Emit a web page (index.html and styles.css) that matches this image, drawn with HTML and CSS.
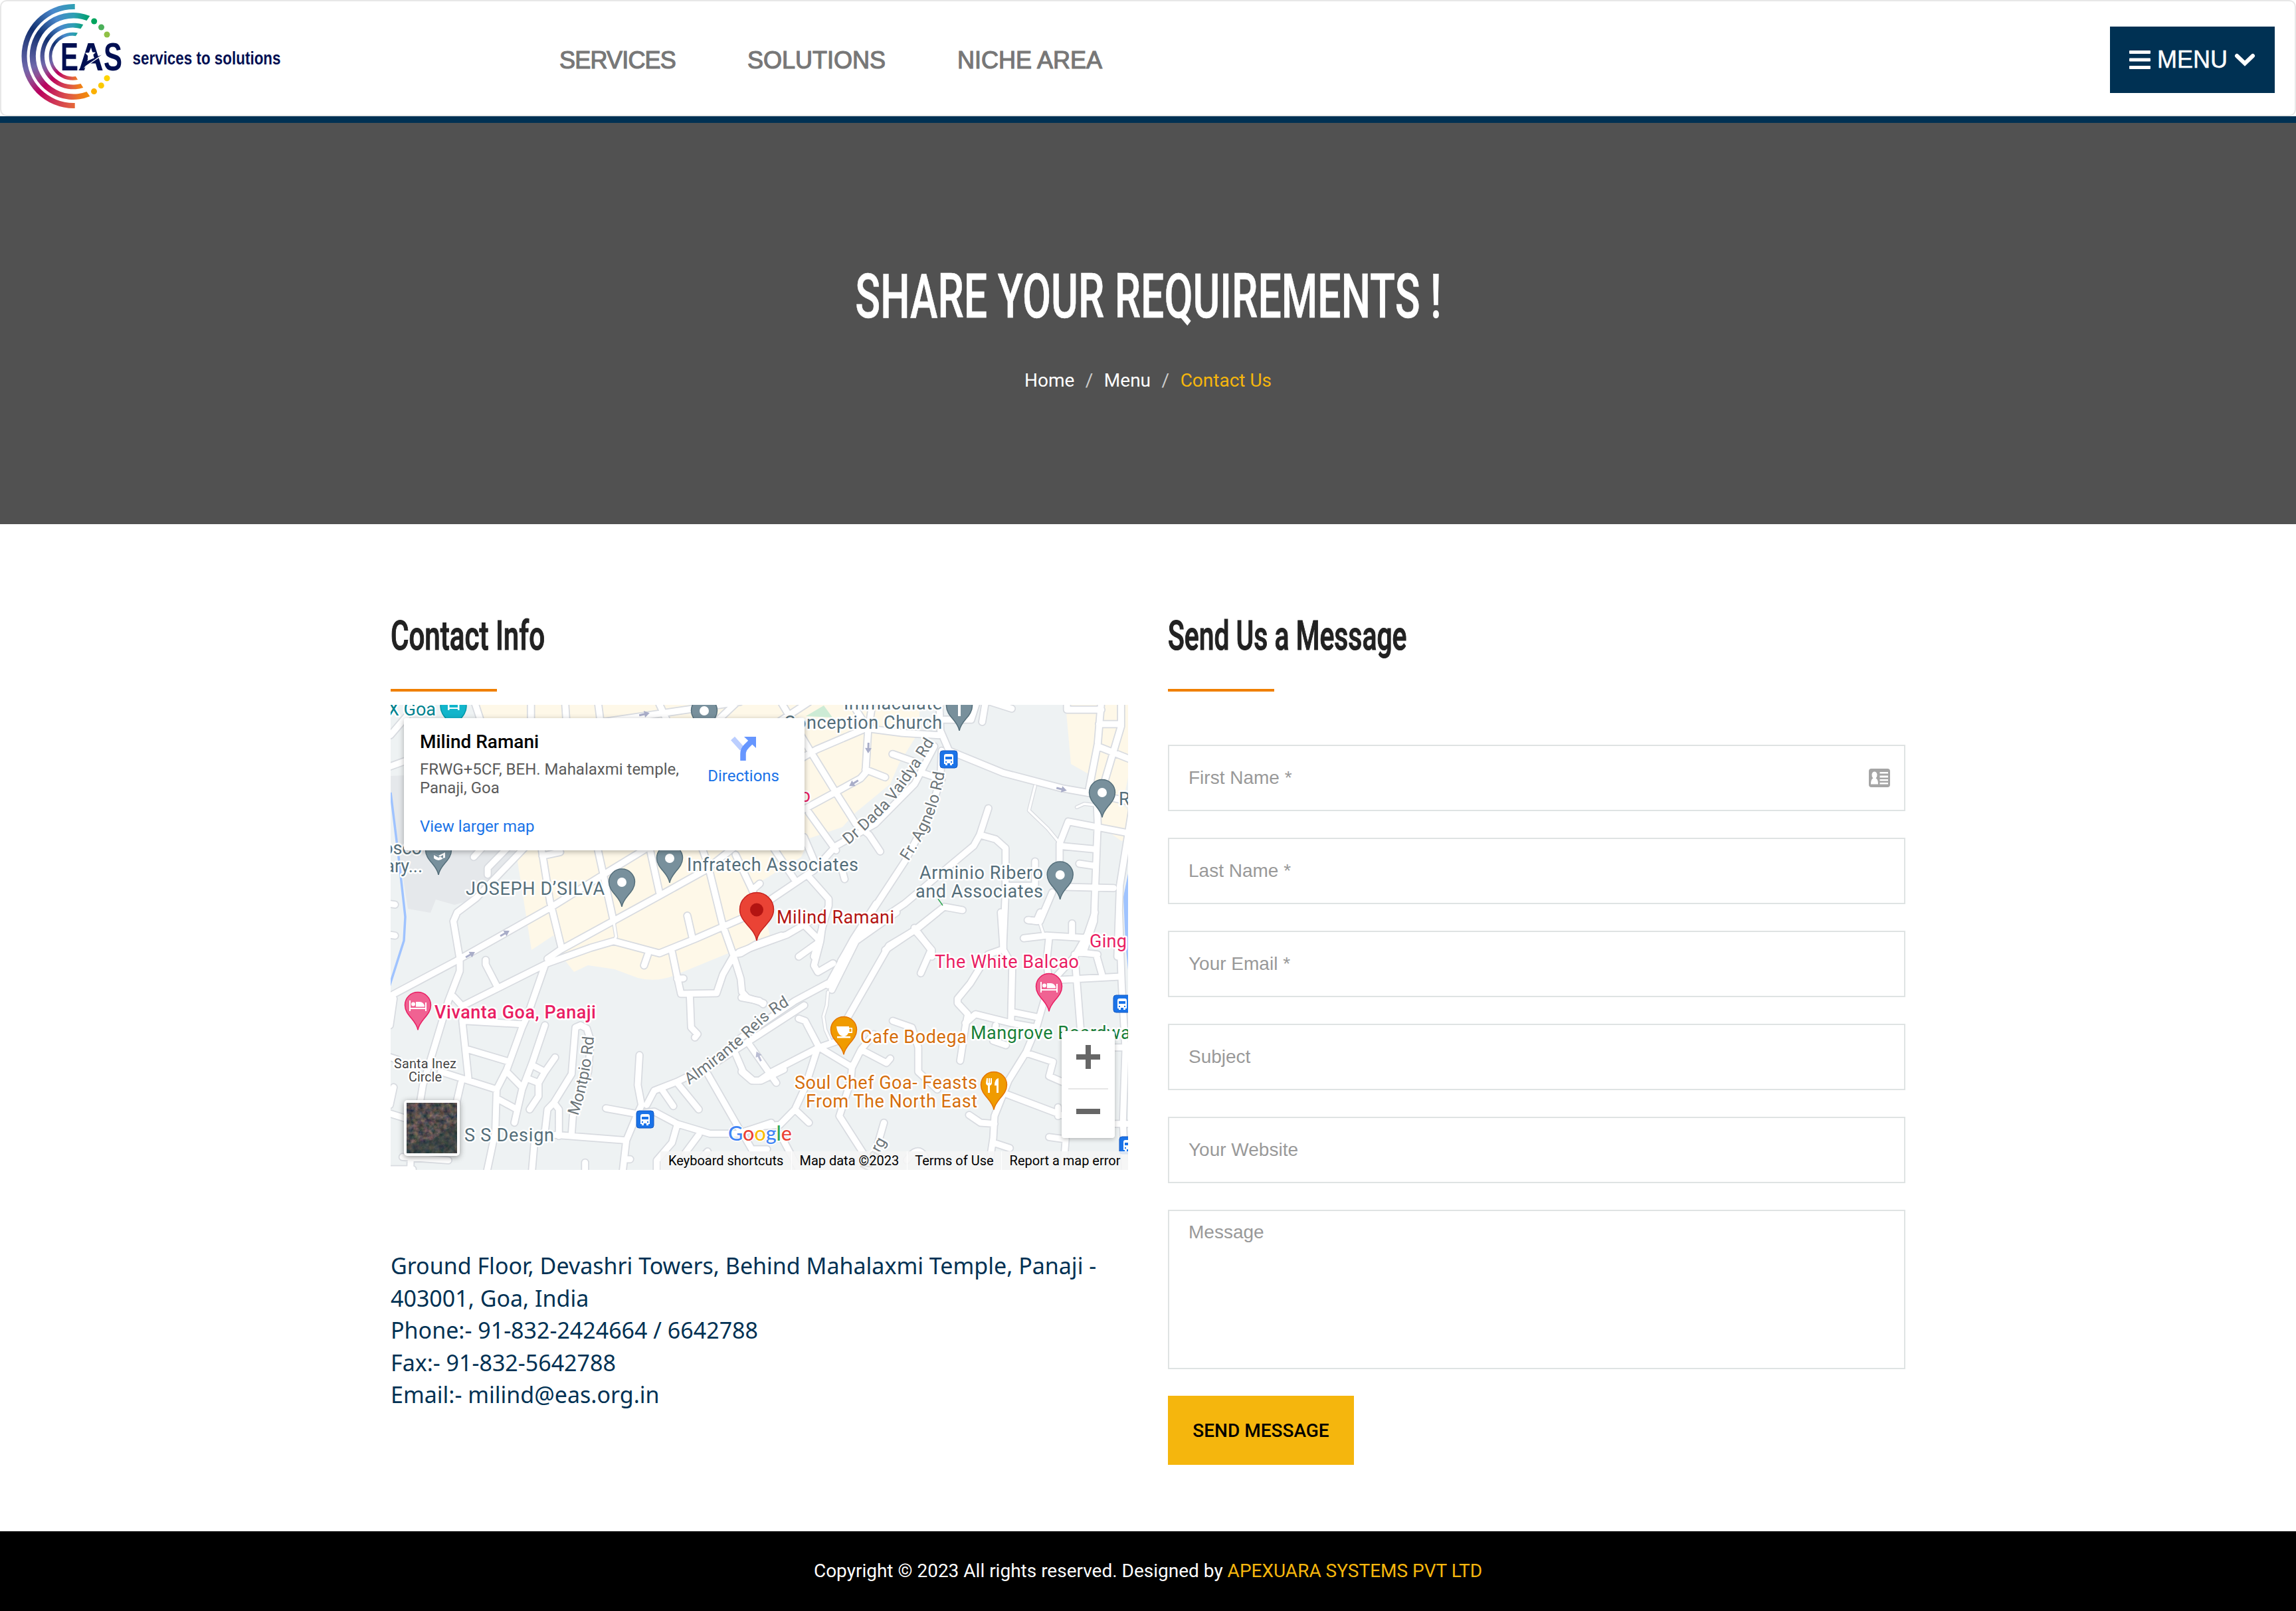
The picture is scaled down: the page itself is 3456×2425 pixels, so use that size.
FILE: index.html
```html
<!DOCTYPE html>
<html lang="en">
<head>
<meta charset="utf-8">
<title>Contact Us - EAS</title>
<link rel="stylesheet" href="styles.css">
</head>
<body>
<header class="header">
  <div class="navbar">
    <a class="logo">
      <span class="logo-rings"></span>
      <svg class="logo-mark" viewBox="0 0 440 171">
        <circle cx="141.7" cy="32" r="4.5" fill="#00a45d"/><circle cx="152.5" cy="41" r="4.5" fill="#4bb05a"/><circle cx="161" cy="52" r="4.5" fill="#8fc045"/>
        <circle cx="161" cy="117.7" r="4.5" fill="#ffd400"/><circle cx="152.3" cy="128.7" r="4.5" fill="#fbc900"/><circle cx="141.5" cy="137.6" r="4.5" fill="#fbb000"/>
        <g class="logo-letters">
          <text x="91" y="105.5" textLength="27" lengthAdjust="spacingAndGlyphs">E</text>
          <text x="118" y="105.5" textLength="38" lengthAdjust="spacingAndGlyphs">A</text>
          <text x="156" y="105.5" textLength="28" lengthAdjust="spacingAndGlyphs">S</text>
        </g>
        <path d="M136.500 73l2 5.500 5.500.3-4 4 2.200 5.400 12.500-5.200-29 20 6.500-13.500 0-5.500-4.200-4.500 6-.3z" fill="#fff"/>
        <path d="M118 105.500L131 92l22-9.500L129 99l-6 6.500z" fill="#000f52"/>
        <text class="logo-tag" x="199.500" y="96.500" textLength="223" lengthAdjust="spacingAndGlyphs">services to solutions</text>
      </svg>
    </a>
    <nav class="nav">
      <a class="nav-link nav-link-tight">SERVICES</a>
      <a class="nav-link">SOLUTIONS</a>
      <a class="nav-link">NICHE AREA</a>
    </nav>
    <button class="menu-button">
      <svg width="32" height="30" viewBox="0 0 32 30" fill="#fff"><rect y="1" width="32" height="5" rx="1"/><rect y="12.500" width="32" height="5" rx="1"/><rect y="24" width="32" height="5" rx="1"/></svg>
      <span>MENU</span>
      <svg width="32" height="20" viewBox="0 0 32 20"><path d="M4 4l12 11.500L28 4" fill="none" stroke="#fff" stroke-width="6" stroke-linecap="round"/></svg>
    </button>
  </div>
</header>

<section class="hero">
  <h1 class="hero-title"><span>SHARE YOUR REQUIREMENTS !</span></h1>
  <div class="crumbs"><a>Home</a><i>/</i><a>Menu</a><i>/</i><b>Contact Us</b></div>
</section>

<main class="content">
  <section class="column">
    <h2 class="title"><span class="title-info">Contact Info</span></h2>
    <div class="rule"></div>
    <div class="map">
      <svg class="map-canvas" viewBox="588 1061 1110 700">
        <defs>
          <g id="roads">
            <g transform="translate(560 900) scale(.3954 .3333)">
              <path d="M390 470L415 560M605 470V560M735 470L740 560M860 470L870 560M880 560L1400 470M1310 560L1390 470M1090 470L1125 560M70 620L135 530M60 765L130 735"/>
            </g>
            <g transform="translate(560 1280) scale(.3827 .3333)">
              <path d="M60 665L330 500L700 260L910 110L1110 -30M640 -60L410 215L335 280L320 320L345 490V545L300 680L200 1060L190 1130L155 1300L150 1460M360 700L690 510L860 440L950 410L1130 465L1270 400L1470 300M690 490L740 450L1130 205L1310 90L1420 -10M665 -20L700 230L745 440M885 -20L950 320M1090 -20L1130 190M1295 -20L1320 60L1380 340L1420 470L1450 580L1455 640L1475 665L1540 690M1430 20L1500 190M1495 180L1525 150M1420 470L1450 465L1510 425L1610 385M1420 480L1380 560L1355 645L1215 648L1200 570L1180 460M1200 580L1225 578M1250 655L1255 800L1280 830L1270 845M1085 470L1070 520M1240 295L1260 395M447 495V515L490 610M680 520L610 750L590 800L530 990L490 1080L485 1270L465 1380L450 1460M320 660L360 710L355 770L380 1040M365 770L590 785M380 900L540 955M270 1000L490 1080M350 1050L330 1150M530 1000L590 1070M490 1120L570 1170M680 790L630 960L590 1080L560 1230M720 935L680 1000L655 1050V1110L620 1170M630 970L680 1000M610 1030L655 1050M820 790L800 800L785 1010L715 1140L690 1170L680 1270L640 1300L628 1460M820 790L845 805L860 860L850 1000L790 1200L785 1280M715 1140L735 1170V1290M720 1285L1000 1310M1052 925L1045 1060L1060 1150L1040 1200L1000 1310L985 1460M1080 1150L1110 1085L1200 1045L1350 960L1700 700M920 1165L1040 1190L1110 1180L1200 1235L1330 1280L1440 1280L1570 1230M1140 1080L1185 1155M1200 1050L1285 1170M1320 1010L1450 1270M1200 1240L1180 1320L1120 1400V1460M1285 1285L1230 1370M1430 920L1460 1000L1500 1040H1530L1620 990M1480 870L1590 1050M85 670L70 790M60 930L100 945M60 1185L130 1210M85 1070L70 1150M120 1385L300 1400M60 1440H160M60 240L90 245M60 380L90 385M838 1410V1460M1320 1360L1280 1410M400 30L440 -20M455 110V80L540 -20M670 25L740 8M1000 1395H1015"/>
            </g>
            <g transform="translate(1120 1380) scale(.3827 .3333)">
              <path d="M-20 160L50 130L170 80L260 20M520 -60L430 100L330 310M600 -20L440 110L345 330M330 300L200 380L-30 560M760 -20L680 55L570 130L410 450L370 560L295 590L110 700L60 740H30L-10 700M670 50L735 150L695 255M295 590L425 680L460 600L510 530M425 670L420 740L375 900L470 1070L500 1150M460 600L560 660L575 640M290 590L240 770L200 870L140 940L80 945L0 970M200 870L255 930M215 460L240 470L295 590M585 470L660 500L685 590V700L760 780M1010 -20L1020 150L1055 220L1050 470M1010 150L960 170L890 300L840 370V390L880 440L870 500L850 650M870 480L910 440L1050 480L1150 500M1055 430L1160 455M990 490L980 560L1030 580M1200 90L1190 200L1200 300L1150 500L1110 610L1040 740L985 900L980 1000L960 1150M1100 97L1190 85L1340 95M1380 -20L1350 80L1300 180L1220 280M1240 285L1480 270M1300 170L1325 530M1385 170L1410 270M1310 160L1390 170M1290 30V90M1120 15L1150 20L1165 -20M1110 615L1215 655L1200 720L1260 750M1030 800L1260 900M1235 860V900M885 895L930 930L985 935M980 1020L1045 1045M1200 995L1265 1005L1255 1150M550 930L520 1050L480 1160M640 1100Q680 1030 710 1080L730 1160M215 180L300 110L230 30M315 -20L300 110L275 220L290 250L350 210M-10 365L60 380L75 395M0 990L30 1050L90 1050M150 1000L220 1150M1460 590H1520M1460 935H1520"/>
              <path class="road-wide" d="M1475 -20L1485 300L1500 600L1490 930L1500 1160"/>
            </g>
            <g transform="translate(1140 1040) scale(.3699 .3333)">
              <path d="M80 20L220 280L320 460L400 600L455 650L500 725M210 50L60 160M140 330L240 265L440 170M470 40L450 190L440 370L420 395L330 450L180 540M440 355L520 390M370 30L450 170L590 190L740 200M740 40L745 180L780 270L1000 370L1240 440L1370 465L1600 520M550 285L640 320M670 370L750 400M750 270L745 400L700 560L600 770L470 990L340 1220M720 250L640 420L480 600L320 700L230 810L30 960M210 550L320 720M60 700L150 850M190 660L240 790M210 840L290 940V970L230 1200M340 790L355 850M940 530L905 650L880 700L600 960L400 1110L340 1220M905 650L970 670L1010 710V900L1000 1160M1400 40L1385 240L1350 440M1480 40V160L1410 420M1390 150H1480M1260 60V85L1400 85M1385 250L1520 310M1380 460L1385 600L1375 880L1370 1040L1330 1170M1230 860V690L1265 590L1500 640M1230 700L1370 715M1310 780L1370 790M1250 885L1450 890M1200 910L1150 1040L1100 1035M1010 880H1130V770M835 990L760 975L640 1080L520 1170M640 1080L710 1170V1200M915 140L930 40M950 50L1035 80M760 130H870L890 60"/>
              <path class="road-wide" d="M1530 500L1475 880L1465 1200"/>
            </g>
          </g>
          <g id="lanes">
            <path transform="translate(560 1280) scale(.3827 .3333)" d="M950 320L960 390L950 410"/>
            <path transform="translate(1120 1380) scale(.3827 .3333)" d="M330 340L325 400L312 450L320 510L340 560"/>
            <path transform="translate(1140 1040) scale(.3699 .3333)" d="M1130 430L1105 540L1180 620L1225 680M1150 1050L1165 1100M1300 525L1330 510L1370 515"/>
          </g>
          <path id="pin" d="M0 0C-2-15-19.500-22-19.500-37.500A19.500 19.500 0 0 1 19.500-37.500C19.500-22 2-15 0 0Z"/>
          <g id="bus"><rect x="-13" y="-13" width="26" height="26" rx="4" fill="#1a73e8" stroke="#1558c0"/><path d="M-7 7V-5Q-7-8-4-8H4Q7-8 7-5V7H5V9H2V6H-2V9H-5V7Z" fill="#fff"/><path d="M-5-4H5V0H-5ZM-5 3h2v2h-2zM3 3h2v2h-2z" fill="#1a73e8"/></g>
          <g id="bed" fill="#fff"><path d="M-13-45h2v11h22v-8h2v13h-2v-3h-22v3h-2z"/><circle cx="-7" cy="-39.500" r="3"/><path d="M-3-35.500v-7.500H3Q10-42 10-35.500Z"/></g>
          <path id="arrow" d="M-8-1.500H0V-5L8 0L0 5V1.500H-8Z" fill="#a9adc8"/>
          <path id="dada" d="M1277 1272Q1310 1245 1340 1213Q1375 1170 1407 1116"/>
          <path id="agnelo" d="M1367 1297Q1395 1255 1406 1225Q1422 1180 1424 1140"/>
          <path id="montpio" d="M870 1680Q890 1620 895 1550"/>
          <path id="almirante" d="M1037 1633Q1100 1590 1140 1550Q1165 1525 1192 1511"/>
          <path id="marg" d="M1308 1766L1334 1718"/>
          <filter id="terrain" x="0" y="0" width="1" height="1" color-interpolation-filters="sRGB"><feTurbulence type="fractalNoise" baseFrequency=".13" numOctaves="4" seed="8"/><feColorMatrix values=".6 0 0 0 .03  .35 .2 0 0 .03  .25 .1 .2 0 .03  0 0 0 0 1"/></filter>
        </defs>
        <rect x="588" y="1061" width="1110" height="700" fill="#eef2f3"/>
        <path d="M588 1168L760 1160L780 1280L720 1352L684 1362L656 1354L648 1374L614 1368L600 1280L588 1200Z" fill="#e5e8eb"/>
        <path d="M720 1061H1384V1100L1353 1150L1340 1180L1288 1223L1268 1245L1218 1262L1206 1290L1140 1330L1160 1413L1096 1435L1023 1465Q990 1480 960 1472L925 1459L885 1453L864 1463L850 1445L833 1408L800 1430L778 1290Z" fill="#fef8e8"/>
        <path d="M1604 1061H1698V1170L1690 1210L1698 1220V1262L1688 1266L1652 1240L1647 1170L1612 1150Z" fill="#fef8e8"/>
        <path d="M1213 1078L1240 1062L1253 1080Z" fill="#cdebd5"/>
        <path d="M588 1193L600 1290L610 1380L608 1416L586 1485" fill="none" stroke="#9fc3ff" stroke-width="3.500"/>
        <path d="M1699 1310L1691 1350L1694 1420L1700 1480Z" fill="#9fc3ff"/>
        <use href="#lanes" class="lane-edge"/><use href="#roads" class="road-edge"/>
        <use href="#lanes" class="lane-fill"/><use href="#roads" class="road-fill"/>
        <path d="M1412 1353L1419 1363" stroke="#34a853" stroke-width="1.500"/>
        <use href="#arrow" transform="translate(970 1075) rotate(-12)"/>
        <use href="#arrow" transform="translate(760 1405) rotate(-30)"/><use href="#arrow" transform="translate(708 1437) rotate(-30)"/>
        <use href="#arrow" transform="translate(1307 1126) rotate(92)"/><use href="#arrow" transform="translate(1285 1179) rotate(148)"/>
        <use href="#arrow" transform="translate(1598 1188) rotate(14)"/><use href="#arrow" transform="translate(1142 1590) rotate(-115)" opacity=".8"/>

        <g stroke-width="1.500">
          <g fill="#78909c" stroke="#546e7a">
            <use href="#pin" x="1060" y="1107"/><use href="#pin" x="1444" y="1100"/><use href="#pin" x="1659" y="1230.500"/><use href="#pin" x="1595.700" y="1354"/>
            <use href="#pin" x="936" y="1365"/><use href="#pin" x="1008" y="1329"/><use href="#pin" x="660" y="1317"/>
          </g>
          <use href="#pin" x="682.500" y="1101" fill="#12b5cb" stroke="#0097a7"/>
          <g fill="#f06292" stroke="#e91e63"><use href="#pin" x="629" y="1550.500"/><use href="#pin" x="1579" y="1522.500"/></g>
          <g fill="#f09b00" stroke="#e37400"><use href="#pin" x="1270" y="1587.500"/><use href="#pin" x="1496" y="1670.500"/></g>
        </g>
        <g fill="#fff"><circle cx="1060" cy="1070" r="7"/><circle cx="1659" cy="1193" r="7"/><circle cx="1595.700" cy="1317" r="7"/><circle cx="936" cy="1328" r="7"/><circle cx="1008" cy="1292" r="7"/>
          <path d="M1442 1055h4v23h-4zM650 1283l10 5 10-5v8l-3 1v-5l-7 4-7-4v5q7 6 14 0M674 1061h2.500v4h12.500v-4h2.500v8h-2.500v-2h-12.500v2h-2.500z"/>
          <path d="M1259 1545h19v2h5v8h-6q-2 5-7 5-9 0-11-15zM1260 1560h20v2.500h-20zM1485 1623h2v7h1v-7h2v7h1v-7h2v7q0 3-3 4v11h-3v-11q-3-1-3-4zM1497 1634q0-10 6-11v22h-3v-11z"/>
        </g>
        <rect x="1278.500" y="1548.500" width="3" height="4.500" fill="#f09b00"/>
        <use href="#bed" x="629" y="1551"/><use href="#bed" x="1579" y="1523"/>
        <use href="#bus" x="1428" y="1143"/><use href="#bus" x="971" y="1685"/><use href="#bus" x="1689" y="1511"/><use href="#bus" x="1698" y="1724"/>
        <path d="M1139 1416C1136 1396 1113.500 1389 1113.500 1369A25.500 25.500 0 0 1 1164.500 1369C1164.500 1389 1142 1396 1139 1416Z" fill="#ea4335" stroke="#c5221f" stroke-width="1.500"/>
        <circle cx="1139" cy="1369.500" r="10" fill="#b31412"/>

        <g class="place">
          <text x="1034" y="1311" textLength="258">Infratech Associates</text>
          <text x="701" y="1346.500" textLength="209">JOSEPH D’SILVA</text>
          <text x="1270" y="1068" textLength="148">Immaculate</text>
          <text x="1180" y="1096.500" textLength="238">Conception Church</text>
          <text x="1384" y="1322.500" textLength="186">Arminio Ribero</text>
          <text x="1378" y="1350.500" textLength="192">and Associates</text>
          <text x="1684" y="1211.500">R</text>
          <text x="699" y="1718" textLength="135">S S Design</text>
          <text x="635" y="1286" text-anchor="end">osco</text>
          <text x="636" y="1313" text-anchor="end">ary...</text>
          <text x="656" y="1076.500" text-anchor="end" fill="#00838f">X Goa</text>
          <g fill="#e91e63">
            <text x="1640" y="1426" textLength="56">Ging</text>
            <text x="1407" y="1456.500" textLength="217">The White Balcao</text>
            <text x="1220" y="1206.500" text-anchor="end">o</text>
            <text x="654" y="1532.500" textLength="243" font-weight="500">Vivanta Goa, Panaji</text>
          </g>
          <g fill="#d56e0c">
            <text x="1295" y="1570" textLength="160">Cafe Bodega</text>
            <text x="1196" y="1638.500" textLength="275">Soul Chef Goa- Feasts</text>
            <text x="1213" y="1666.500" textLength="258">From The North East</text>
          </g>
          <text x="1461" y="1564" textLength="262" fill="#188038">Mangrove Boardwalk</text>
          <text x="1169" y="1389.500" textLength="177" fill="#b31412">Milind Ramani</text>
          <g class="street">
            <text><textPath href="#dada" textLength="203">Dr Dada Vaidya Rd</textPath></text>
            <text><textPath href="#agnelo" textLength="146">Fr. Agnelo Rd</textPath></text>
            <text><textPath href="#montpio" textLength="122">Montpio Rd</textPath></text>
            <text><textPath href="#almirante" textLength="194">Almirante Reis Rd</textPath></text>
            <text><textPath href="#marg">Marg</textPath></text>
          </g>
          <g class="locality"><text x="593" y="1608" textLength="94">Santa Inez</text><text x="615" y="1628" textLength="50">Circle</text></g>
        </g>
        <text class="google" x="1096" y="1717" textLength="96" lengthAdjust="spacingAndGlyphs"><tspan fill="#4285f4">G</tspan><tspan fill="#ea4335">o</tspan><tspan fill="#fbbc04">o</tspan><tspan fill="#4285f4">g</tspan><tspan fill="#34a853">l</tspan><tspan fill="#ea4335">e</tspan></text>
        <rect class="thumb" x="608" y="1656" width="84" height="84" rx="5" fill="#fff"/>
        <rect x="612" y="1660" width="76" height="76" filter="url(#terrain)"/>
        <path d="M612 1736V1722L650 1716L688 1690V1736Z" fill="#1f3a36" opacity=".4"/>
      </svg>
      <div class="place-card">
        <div>
          <div class="place-name">Milind Ramani</div>
          <div class="place-address">FRWG+5CF, BEH. Mahalaxmi temple,<br>Panaji, Goa</div>
          <a class="place-link">View larger map</a>
        </div>
        <a class="directions">
          <svg width="38" height="38" viewBox="0 0 38 38"><path d="M3 3.500L17 19" stroke="#bbceff" stroke-width="8" fill="none"/><path d="M18.500 37V27Q18.500 20 24 15L31 8" stroke="#6696ff" stroke-width="8.500" fill="none"/><path d="M20 1H38V18Z" fill="#6696ff"/></svg>
          <span>Directions</span>
        </a>
      </div>
      <div class="zoom-control"><span class="zoom-in"></span><hr><span class="zoom-out"></span></div>
      <div class="attribution"><span>Keyboard shortcuts</span><span>Map data ©2023</span><span>Terms of Use</span><span>Report a map error</span></div>
    </div>
    <address class="address">Ground Floor, Devashri Towers, Behind Mahalaxmi Temple, Panaji -<br>403001, Goa, India<br>Phone:- 91-832-2424664 / 6642788<br>Fax:- 91-832-5642788<br>Email:- milind@eas.org.in</address>
  </section>

  <section class="column">
    <h2 class="title"><span class="title-message">Send Us a Message</span></h2>
    <div class="rule"></div>
    <form class="form">
      <div class="field">
        <input class="input" placeholder="First Name *">
        <svg class="field-icon" width="32" height="28" viewBox="0 0 32 28"><rect width="32" height="28" rx="4" fill="#a5a5a5"/><path d="M3 23.500Q3 15.500 6.500 14.500Q4 12 4.500 8.500Q5.500 4.500 8.500 4.500T12.500 8.500Q13 12 10.500 14.500Q14 15.500 14 23.500ZM16.500 5H29V7.500H16.500ZM16.500 10.500H29V13.500H16.500ZM16.500 16H29V18.500H16.500ZM16.500 21H29V23.500H16.500Z" fill="#fff"/></svg>
      </div>
      <input class="input" placeholder="Last Name *">
      <input class="input" placeholder="Your Email *">
      <input class="input" placeholder="Subject">
      <input class="input" placeholder="Your Website">
      <textarea class="input textarea" placeholder="Message"></textarea>
      <button class="submit" type="button">SEND MESSAGE</button>
    </form>
  </section>
</main>

<footer class="footer"><p>Copyright © 2023 All rights reserved. Designed by <a>APEXUARA SYSTEMS PVT LTD</a></p></footer>
</body>
</html>
```
FILE: styles.css
```css
* { box-sizing: border-box; }
body { margin: 0; background: #fff; font-family: Roboto, sans-serif; font-size: 28px; color: #222; }

.header { height: 185px; background: #fff; border-bottom: 10px solid #003153; }
.navbar { display: flex; align-items: center; height: 175px; padding-right: 30px; border: 2px solid #e7e7e7; border-radius: 10px; }
.logo { display: grid; width: 440px; height: 171px; margin-left: -2px; }
.logo > * { grid-area: 1 / 1; }
.logo-rings {
  width: 222px; height: 169px; margin-top: -2px;
  background: conic-gradient(from 0deg at 111px 84.500px, #2f9fb5, #00a070 20deg, #f39200 155deg, #ee7a1c 170deg, #df5b45 185deg, #cc3058 205deg, #b9005e 224deg, #8f4f95 242deg, #7068ab 255deg, #4f5799 270deg, #12306f 303deg, #4a88cc 335deg, #2f9fb5 360deg);
  clip-path: path("M112.700 6H111A78.500 78.500 0 0 0 111 163H112.700V155H111A70.500 70.500 0 0 1 111 14H112.700ZM135.300 24A65.500 65.500 0 1 0 135.300 145L130.500 138A57 57 0 1 1 130.500 31ZM125.300 37A49.800 49.800 0 1 0 125.300 132L121.500 126A43 43 0 1 1 121.500 43.200ZM117 49.500A36 36 0 1 0 117 120L114 115A30.800 30.800 0 1 1 114 54.200Z");
}
.logo-mark { width: 440px; height: 171px; margin-top: -2px; }
.logo-letters, .logo-tag { font-family: "Liberation Sans", sans-serif; font-weight: 700; fill: #000f52; }
.logo-letters { font-size: 60px; }
.logo-tag { font-size: 27px; }
.nav { display: flex; gap: 108px; margin-left: 402px; }
.nav-link { font-family: "Liberation Sans", sans-serif; font-size: 36px; line-height: 50px; color: #777; -webkit-text-stroke: 1.2px #777; margin-top: 6px; }
.nav-link-tight { letter-spacing: -.8px; }
.menu-button { display: flex; align-items: center; justify-content: center; gap: 10px; width: 248px; height: 100px; margin: 5px 0 0 auto; padding: 0; border: 0; background: #003153; color: #fff; font: 36px "Liberation Sans", sans-serif; -webkit-text-stroke: .5px #fff; }

.hero { height: 604px; padding-top: 204px; background: #515151; color: #fff; text-align: center; }
.hero-title { margin: 0; font-size: 93px; font-weight: 500; line-height: 116px; white-space: nowrap; }
.hero-title span { display: inline-block; transform: scaleX(.672); -webkit-text-stroke: .6px #fff; }
.crumbs { display: flex; justify-content: center; gap: 16.500px; margin-top: 49px; line-height: 38px; }
.crumbs i { font-style: normal; color: #ccc; }
.crumbs b { font-weight: 400; color: #f5b60d; }

.content { display: grid; grid-template-columns: 1110px 1110px; gap: 60px; justify-content: center; height: 1516px; padding-top: 123px; }
.title { margin: 0; height: 90px; font-size: 61px; font-weight: 500; line-height: 90px; white-space: nowrap; }
.title span { display: inline-block; transform-origin: 0 50%; -webkit-text-stroke: 1.200px #222; }
.title-info { transform: scaleX(.69); }
.title-message { transform: scaleX(.67); }
.rule { width: 160px; height: 4px; margin-top: 35px; background: #f07f00; }

.map { position: relative; height: 700px; margin-top: 20px; overflow: hidden; }
.map-canvas { display: block; width: 1110px; height: 700px; }
.map-canvas path { vector-effect: non-scaling-stroke; }
.road-edge, .road-fill, .lane-edge, .lane-fill { fill: none; stroke-linecap: round; stroke-linejoin: round; }
.road-edge { stroke: #d8dbe0; stroke-width: 12.500px; }
.road-fill { stroke: #fff; stroke-width: 9px; }
.lane-edge { stroke: #d8dbe0; stroke-width: 6px; }
.lane-fill { stroke: #fff; stroke-width: 3.500px; }
.place { font-size: 27px; fill: #546e7a; stroke: #fff; stroke-width: 5px; stroke-linejoin: round; paint-order: stroke; }
.street { font-size: 24px; fill: #6b7478; }
.locality { font-size: 20px; fill: #444; }
.google { font-family: Lato, sans-serif; font-size: 30px; font-weight: 500; stroke: #fff; stroke-width: 3px; paint-order: stroke; }
.thumb { filter: drop-shadow(0 2px 4px rgba(0, 0, 0, .4)); }
.place-card { position: absolute; top: 20px; left: 20px; display: flex; justify-content: space-between; width: 603px; height: 199px; padding: 20px 38px 0 24px; background: #fff; border-radius: 3px; box-shadow: 0 2px 8px rgba(0, 0, 0, .3); font-size: 24px; line-height: 28px; }
.place-name { font-size: 28px; font-weight: 500; line-height: 32px; color: #000; }
.place-address { margin-top: 11px; color: #5b5b5b; white-space: nowrap; }
.place-link { display: block; margin-top: 30px; color: #1a73e8; }
.directions { display: flex; flex-direction: column; align-items: center; gap: 8px; margin-top: 7px; color: #1a73e8; }
.zoom-control { position: absolute; left: 1010px; top: 491px; display: flex; flex-direction: column; align-items: center; justify-content: space-between; width: 80px; height: 161px; padding: 21px 10px 36px; background: #fff; border-radius: 4px; box-shadow: 0 2px 6px rgba(0, 0, 0, .25); }
.zoom-control hr { width: 60px; height: 2px; margin: 0; border: 0; background: #e6e6e6; }
.zoom-in { width: 36px; height: 36px; background: linear-gradient(#666, #666) center / 36px 8px no-repeat, linear-gradient(#666, #666) center / 8px 36px no-repeat; }
.zoom-out { width: 36px; height: 8px; background: #666; }
.attribution { position: absolute; right: 0; bottom: 0; display: flex; height: 28px; background: rgba(245, 245, 245, .88); color: #000; font-size: 20px; line-height: 29px; white-space: nowrap; }
.attribution span { padding: 0 11.500px; }
.attribution span + span { border-left: 1px solid #fff; }

.address { margin-top: 120px; font: 34px/48.600px "Noto Sans", sans-serif; color: #003153; white-space: nowrap; }

.form { display: flex; flex-direction: column; align-items: flex-start; gap: 40px; margin-top: 80px; }
.field { position: relative; width: 100%; }
.field-icon { position: absolute; right: 23px; top: 36px; }
.input { display: block; width: 100%; height: 100px; padding: 0 29px; border: 2px solid #dfe3e3; border-radius: 0; background: #fff; font: 28px "Liberation Sans", sans-serif; }
.input::placeholder { color: #999; opacity: 1; }
.textarea { height: 240px; padding: 16px 29px; resize: none; }
.submit { width: 280px; height: 104px; padding: 0; border: 0; background: #f5b60d; color: #000; font: 500 28px Roboto, sans-serif; }

.footer { display: flex; align-items: center; justify-content: center; height: 120px; background: #000; color: #fff; }
.footer p { margin: 0 0 2px; }
.footer a { color: #f5b60d; }
```
